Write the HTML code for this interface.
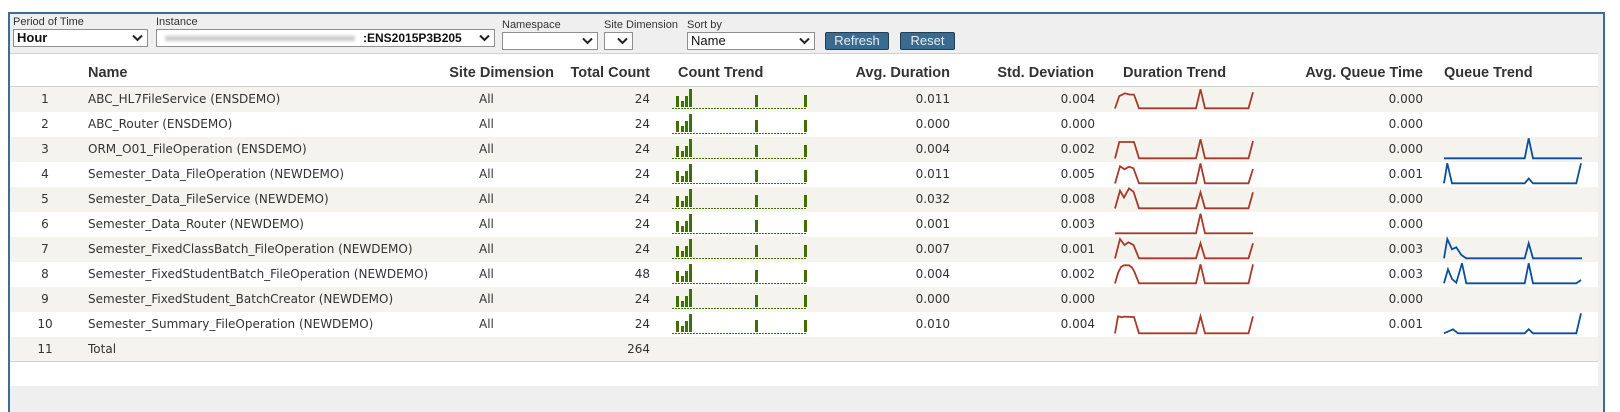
<!DOCTYPE html>
<html><head><meta charset="utf-8"><style>
*{margin:0;padding:0;box-sizing:border-box}
body{width:1620px;height:410px;background:#fff;position:relative;overflow:hidden;font-family:"DejaVu Sans",Verdana,sans-serif;color:#333}
.a{position:absolute}
.frame{left:8px;top:12px;width:1597px;height:400px;border:2px solid #3d6e91;border-bottom:none;background:#efefef}
.lbl{font-family:"Liberation Sans",Arial,sans-serif;font-size:11px;color:#333}
.sel{background:#fff;border:1px solid #8f8f8f;font-family:"Liberation Sans",Arial,sans-serif;font-size:13px;line-height:16px;padding-left:3px;color:#111}
.chev{position:absolute;right:4px;top:4px}
.btn{background:#3a6b8e;border:1px solid #1f3f58;border-radius:2px;color:#e6eef4;font-family:"Liberation Sans",Arial,sans-serif;font-size:13px;text-align:center;line-height:16px}
.tbl{left:10px;top:53px;width:1588px;height:333px;background:#fff;border-top:1px solid #d0d0d0}
.hd{font-family:"Liberation Sans",Arial,sans-serif;font-weight:bold;font-size:14.5px;color:#333;top:65px;white-space:nowrap}
.row{position:absolute;left:10px;width:1588px;height:25px;font-size:12px;line-height:25px}
.row span{position:absolute;white-space:nowrap}
.o{background:#f4f3ed}
.i{left:20px;width:30px;text-align:center}
.n{left:78px}
.s{left:469px}
.r1{left:570px;width:70px;text-align:right}
.r2{left:870px;width:70px;text-align:right}
.r3{left:1015px;width:70px;text-align:right}
.r4{left:1343px;width:70px;text-align:right}
</style></head><body>
<div class="a frame"></div>
<div class="a lbl" style="left:13px;top:16px">Period of Time</div>
<div class="a lbl" style="left:156px;top:16px">Instance</div>
<div class="a lbl" style="left:502px;top:19px">Namespace</div>
<div class="a lbl" style="left:604px;top:19px">Site Dimension</div>
<div class="a lbl" style="left:687px;top:19px">Sort by</div>
<div class="a sel" style="left:13px;top:29px;width:135px;height:18px;font-weight:bold">Hour<svg class="chev" width="11" height="8"><path d="M1 1.5L5.5 6L10 1.5" stroke="#222" stroke-width="2" fill="none"/></svg></div>
<div class="a sel" style="left:156px;top:29px;width:339px;height:18px;font-weight:bold;font-size:12px"><div class="a" style="left:8px;top:6px;width:190px;height:5px;background:#c9c9c9;filter:blur(1.5px)"></div><span class="a" style="left:206px;top:0">:ENS2015P3B205</span><svg class="chev" width="11" height="8"><path d="M1 1.5L5.5 6L10 1.5" stroke="#222" stroke-width="2" fill="none"/></svg></div>
<div class="a sel" style="left:502px;top:32px;width:96px;height:18px"><svg class="chev" width="11" height="8"><path d="M1 1.5L5.5 6L10 1.5" stroke="#222" stroke-width="2" fill="none"/></svg></div>
<div class="a sel" style="left:604px;top:32px;width:29px;height:18px"><svg class="chev" width="11" height="8"><path d="M1 1.5L5.5 6L10 1.5" stroke="#222" stroke-width="2" fill="none"/></svg></div>
<div class="a sel" style="left:687px;top:32px;width:128px;height:18px">Name<svg class="chev" width="11" height="8"><path d="M1 1.5L5.5 6L10 1.5" stroke="#222" stroke-width="2" fill="none"/></svg></div>
<div class="a btn" style="left:825px;top:32px;width:64px;height:18px">Refresh</div>
<div class="a btn" style="left:900px;top:32px;width:55px;height:18px">Reset</div>

<div class="a tbl"></div>
<div class="a" style="left:10px;top:86px;width:1588px;height:1px;background:#d0d0d0"></div>
<div class="a hd" style="left:88px">Name</div>
<div class="a hd" style="left:404px;width:150px;text-align:right">Site Dimension</div>
<div class="a hd" style="left:540px;width:110px;text-align:right">Total Count</div>
<div class="a hd" style="left:678px">Count Trend</div>
<div class="a hd" style="left:800px;width:150px;text-align:right">Avg. Duration</div>
<div class="a hd" style="left:944px;width:150px;text-align:right">Std. Deviation</div>
<div class="a hd" style="left:1123px">Duration Trend</div>
<div class="a hd" style="left:1253px;width:170px;text-align:right">Avg. Queue Time</div>
<div class="a hd" style="left:1444px">Queue Trend</div>

<div class="row o" style="top:87px"><span class="i">1</span><span class="n">ABC_HL7FileService (ENSDEMO)</span><span class="s">All</span><span class="r1">24</span><span class="r2">0.011</span><span class="r3">0.004</span><span class="r4">0.000</span></div>
<div class="row" style="top:112px"><span class="i">2</span><span class="n">ABC_Router (ENSDEMO)</span><span class="s">All</span><span class="r1">24</span><span class="r2">0.000</span><span class="r3">0.000</span><span class="r4">0.000</span></div>
<div class="row o" style="top:137px"><span class="i">3</span><span class="n">ORM_O01_FileOperation (ENSDEMO)</span><span class="s">All</span><span class="r1">24</span><span class="r2">0.004</span><span class="r3">0.002</span><span class="r4">0.000</span></div>
<div class="row" style="top:162px"><span class="i">4</span><span class="n">Semester_Data_FileOperation (NEWDEMO)</span><span class="s">All</span><span class="r1">24</span><span class="r2">0.011</span><span class="r3">0.005</span><span class="r4">0.001</span></div>
<div class="row o" style="top:187px"><span class="i">5</span><span class="n">Semester_Data_FileService (NEWDEMO)</span><span class="s">All</span><span class="r1">24</span><span class="r2">0.032</span><span class="r3">0.008</span><span class="r4">0.000</span></div>
<div class="row" style="top:212px"><span class="i">6</span><span class="n">Semester_Data_Router (NEWDEMO)</span><span class="s">All</span><span class="r1">24</span><span class="r2">0.001</span><span class="r3">0.003</span><span class="r4">0.000</span></div>
<div class="row o" style="top:237px"><span class="i">7</span><span class="n">Semester_FixedClassBatch_FileOperation (NEWDEMO)</span><span class="s">All</span><span class="r1">24</span><span class="r2">0.007</span><span class="r3">0.001</span><span class="r4">0.003</span></div>
<div class="row" style="top:262px"><span class="i">8</span><span class="n">Semester_FixedStudentBatch_FileOperation (NEWDEMO)</span><span class="s">All</span><span class="r1">48</span><span class="r2">0.004</span><span class="r3">0.002</span><span class="r4">0.003</span></div>
<div class="row o" style="top:287px"><span class="i">9</span><span class="n">Semester_FixedStudent_BatchCreator (NEWDEMO)</span><span class="s">All</span><span class="r1">24</span><span class="r2">0.000</span><span class="r3">0.000</span><span class="r4">0.000</span></div>
<div class="row" style="top:312px"><span class="i">10</span><span class="n">Semester_Summary_FileOperation (NEWDEMO)</span><span class="s">All</span><span class="r1">24</span><span class="r2">0.010</span><span class="r3">0.004</span><span class="r4">0.001</span></div>
<div class="row o" style="top:337px"><span class="i">11</span><span class="n">Total</span><span class="r1">264</span></div>
<div class="a" style="left:10px;top:361px;width:1588px;height:1px;background:#d0d0d0"></div>

<svg class="a" style="left:0;top:0" width="1620" height="410">
<defs>
<g id="ct" fill="#3f7000">
<rect x="4" y="10" width="3" height="11"/><rect x="9" y="15" width="3" height="6"/><rect x="13" y="10" width="3" height="11"/><rect x="17" y="3" width="3" height="18"/><rect x="83" y="9" width="3" height="12"/><rect x="132" y="9" width="3" height="12"/>
<line x1="0" y1="22.5" x2="135" y2="22.5" stroke="#3f7000" stroke-width="1" stroke-dasharray="2,1"/>
</g>
</defs>
<g><use href="#ct" x="672" y="86"/><use href="#ct" x="672" y="111"/><use href="#ct" x="672" y="136"/><use href="#ct" x="672" y="161"/><use href="#ct" x="672" y="186"/><use href="#ct" x="672" y="211"/><use href="#ct" x="672" y="236"/><use href="#ct" x="672" y="261"/><use href="#ct" x="672" y="286"/><use href="#ct" x="672" y="311"/></g>
<g fill="none" stroke="#a83a2c" stroke-width="1.8" stroke-linejoin="miter">
<path transform="translate(1115,86)" d="M0 22.5L4.3 10L10 7.3L15 8.6L19 8.6L24 22.3L81 22.3L85.5 3.3L90 22.3L133.5 22.3L138 6.3"/>
<path transform="translate(1115,136)" d="M0 22.5L4.3 6L19 6L24 22.3L81 22.3L85.5 3.3L90 22.3L133.5 22.3L138 5"/>
<path transform="translate(1115,161)" d="M0 22.5L5 5.3L9.5 8.3L14 5.7L18.5 7.3L24 22.3L81 22.3L85.5 2.5L90 22.3L133.5 22.3L138 8"/>
<path transform="translate(1115,186)" d="M0 22.5L5 4.7L9 11.5L14 2.5L18.5 5.7L24 22.3L81 22.3L85.5 6.3L90 22.3L133.5 22.3L138 6.3"/>
<path transform="translate(1115,211)" d="M0 22.3L81 22.3L85.5 2.7L90 22.3L138 22.3"/>
<path transform="translate(1115,236)" d="M0 22.5L5 3L9.5 9L13.5 6.3L18.5 9L24 22.3L81 22.3L85.5 7.3L90 22.3L133.5 22.3L138 7.3"/>
<path transform="translate(1115,261)" d="M0 22.5L3 12L6 6L9 4.3L14 4.3L17 6.5L19.5 11L24 22.3L81 22.3L85.5 3.3L90 22.3L133.5 22.3L138 3.3"/>
<path transform="translate(1115,311)" d="M0 22.5L3 5.3L7 6.3L9 5.7L19 6L24 22.3L81 22.3L85.5 5.3L90 22.3L133.5 22.3L138 5.3"/>
</g>
<g fill="none" stroke="#0b4f9c" stroke-width="1.8">
<path transform="translate(1444,136)" d="M0 22.3L80.7 22.3L84.7 2.3L89 22.3L138 22.3"/>
<path transform="translate(1444,161)" d="M0 22.3L3.3 2.3L8 22.3L80.7 22.3L84.7 17.5L89 22.3L132.3 22.3L137 2.3"/>
<path transform="translate(1444,236)" d="M0 22.3L3.3 3L8 13.3L12.3 11.3L17.3 19L22.3 22.3L80.7 22.3L84.7 7.3L89 22.3L138 22.3"/>
<path transform="translate(1444,261)" d="M0 22.3L4 8.3L8 18L12.3 21.7L18 2.3L22.3 22.3L80.7 22.3L84.7 2.3L89 22.3L132.3 22.3L137 19"/>
<path transform="translate(1444,311)" d="M0 22.3L9 18.3L14 22.3L80.7 22.3L84.7 18.3L89 22.3L132.3 22.3L137 2.3"/>
</g>
</svg>
</body></html>
